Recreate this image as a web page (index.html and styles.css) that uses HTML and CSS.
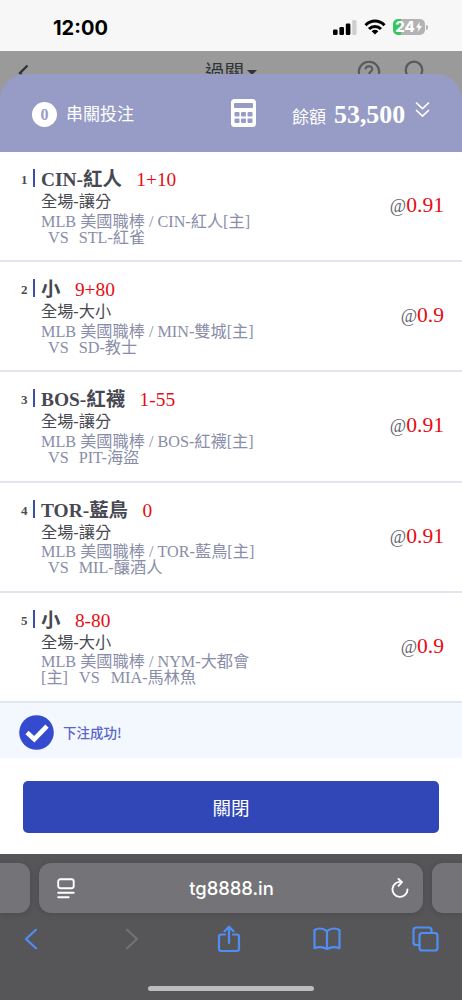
FILE: index.html
```html
<!DOCTYPE html>
<html lang="zh-Hant">
<head>
<meta charset="utf-8">
<meta name="viewport" content="width=device-width, initial-scale=1">
<title>串關投注</title>
<link rel="stylesheet" href="styles.css">
</head>
<body>
<header class="status">
  <span class="clock">12:00</span>
  <div class="status-icons">
    <svg class="signal" width="24" height="16" viewBox="0 0 24 16"><rect x="0" y="9.5" width="4.6" height="5.5" rx="1.3"/><rect x="6.4" y="7" width="4.6" height="8" rx="1.3"/><rect x="12.8" y="3.5" width="4.6" height="11.5" rx="1.3"/><rect x="19.2" y="0" width="4.3" height="15" rx="1.3" fill="#cfcfcf"/></svg>
    <svg class="wifi" width="22" height="16" viewBox="0 0 22 16" fill="none" stroke="#000" stroke-width="3"><path d="M1.5 6.2C7 .7 15 .7 20.5 6.2"/><path d="M5 10C8.4 6.5 13.6 6.5 17 10"/><path d="M7.6 12.2Q11 9.4 14.4 12.2L11 15.6Z" fill="#000" stroke="none"/></svg>
    <span class="battery"><span class="battery-value">24</span><svg width="8" height="12" viewBox="0 0 9 12"><path d="M5.5.5 1 6.7h3L3 11.5 8 5H4.9Z" fill="#fff"/></svg></span><i class="nub"></i>
  </div>
</header>
<nav class="page-nav">
  <svg class="back" width="12" height="18" viewBox="0 0 12 18" fill="none" stroke="#30343a" stroke-width="2.4"><path d="M9.5 1.5 2 9l7.500 7.500"/></svg>
  <span class="page-title">過關<i class="caret"></i></span>
  <svg class="help" width="24" height="24" viewBox="0 0 24 24" fill="none" stroke="#555961" stroke-width="2"><circle cx="12" cy="12" r="10.200"/><path d="M8.500 9.200C8.800 5 15.500 5.200 15.300 9.300C15.200 11.500 12 11.700 12 14.500M12 16v2"/></svg>
  <svg class="search" width="22" height="24" viewBox="0 0 22 24" fill="none" stroke="#555961" stroke-width="2.200"><circle cx="10" cy="10" r="8.300"/><path d="m16 16 5 6"/></svg>
</nav>
<main class="sheet">
  <header class="slip-head">
    <span class="count">0</span>
    <span class="slip-title">串關投注</span>
    <svg class="calc" width="25" height="28" viewBox="0 0 25 28"><rect width="25" height="28" rx="3.500" fill="#fff"/><g fill="#969cc5"><rect x="3" y="4" width="19" height="5" rx="1"/><rect x="3.500" y="13" width="5" height="4.500" rx="1"/><rect x="10" y="13" width="5" height="4.500" rx="1"/><rect x="16.500" y="13" width="5" height="4.500" rx="1"/><rect x="3.500" y="19.500" width="5" height="4.500" rx="1"/><rect x="10" y="19.500" width="5" height="4.500" rx="1"/><rect x="16.500" y="19.500" width="5" height="4.500" rx="1"/></g></svg>
    <span class="balance"><span class="balance-label">餘額</span><b>53,500</b></span>
    <svg class="collapse" width="15" height="17" viewBox="0 0 15 17" fill="none" stroke="#fff" stroke-width="1.700"><path d="m1 1.500 6.500 6L14 1.500M1 9l6.500 6L14 9"/></svg>
  </header>
  <ol class="bets">
    <li class="bet"><span class="num">1</span><div class="info"><div class="pick"><b>CIN-紅人</b><span>1+10</span></div><div class="market">全場-讓分</div><div class="match">MLB 美國職棒 / CIN-紅人[主]<br><span class="versus">VS</span>STL-紅雀</div></div><div class="odds">@<strong>0.91</strong></div></li>
    <li class="bet"><span class="num">2</span><div class="info"><div class="pick"><b>小</b><span>9+80</span></div><div class="market">全場-大小</div><div class="match">MLB 美國職棒 / MIN-雙城[主]<br><span class="versus">VS</span>SD-教士</div></div><div class="odds">@<strong>0.9</strong></div></li>
    <li class="bet"><span class="num">3</span><div class="info"><div class="pick"><b>BOS-紅襪</b><span>1-55</span></div><div class="market">全場-讓分</div><div class="match">MLB 美國職棒 / BOS-紅襪[主]<br><span class="versus">VS</span>PIT-海盜</div></div><div class="odds">@<strong>0.91</strong></div></li>
    <li class="bet"><span class="num">4</span><div class="info"><div class="pick"><b>TOR-藍鳥</b><span>0</span></div><div class="market">全場-讓分</div><div class="match">MLB 美國職棒 / TOR-藍鳥[主]<br><span class="versus">VS</span>MIL-釀酒人</div></div><div class="odds">@<strong>0.91</strong></div></li>
    <li class="bet"><span class="num">5</span><div class="info"><div class="pick"><b>小</b><span>8-80</span></div><div class="market">全場-大小</div><div class="match">MLB 美國職棒 / NYM-大都會<br>[主]<span class="versus wide">VS</span>MIA-馬林魚</div></div><div class="odds">@<strong>0.9</strong></div></li>
  </ol>
  <div class="success">
    <svg width="35" height="35" viewBox="0 0 35 35"><circle cx="17.500" cy="17.500" r="17.300" fill="#344bd0"/><path d="m8 17.500 7.300 6.700L28 11.200" fill="none" stroke="#fff" stroke-width="4.600"/></svg>
    <span>下注成功!</span>
  </div>
  <div class="actions"><button class="close">關閉</button></div>
</main>
<footer class="browser">
  <div class="tabs">
    <div class="tab side left"></div>
    <div class="tab address">
      <svg width="18" height="21" viewBox="0 0 18 21" fill="none" stroke="#fff" stroke-width="1.900" stroke-linecap="round"><rect x="1.200" y="1.200" width="15.500" height="9" rx="2.200"/><path d="M1.200 14.700h15.500M1.200 19.200h10.500"/></svg>
      <span class="host">tg8888.in</span>
      <svg width="18" height="21" viewBox="0 0 18 21" fill="none" stroke="#fff" stroke-width="1.900" stroke-linecap="round" stroke-linejoin="round"><path d="M10.500 4A7.500 7.500 0 1 0 16.500 11.400M7.500 1 11 4.200 7.500 7.800"/></svg>
    </div>
    <div class="tab side right"></div>
  </div>
  <div class="tools">
    <svg width="14" height="22" viewBox="0 0 14 22"><path d="M12 1.800 2 11l10 9.200"/></svg>
    <svg class="disabled" width="14" height="22" viewBox="0 0 14 22"><path d="m2 1.800 10 9.200L2 20.200"/></svg>
    <svg class="share" width="24" height="28" viewBox="0 0 24 28"><path d="M8 9.500H4.200Q2 9.500 2 11.700v12.100Q2 26 4.200 26h15.600q2.200 0 2.200-2.200V11.700q0-2.200-2.200-2.200H16M12 18V2M7.500 6.200 12 1.700l4.500 4.500"/></svg>
    <svg class="book" width="28" height="24" viewBox="0 0 28 24"><path d="M14 4.200Q8-.5 1.500 3v18.200Q8 18.500 14 22Q20 18.500 26.500 21.200V3Q20-.5 14 4.200V22"/></svg>
    <svg class="windows" width="27" height="26" viewBox="0 0 27 26"><rect x="7.500" y="7" width="18" height="17.500" rx="2.800"/><path d="M7.500 19H4.300Q1.500 19 1.500 16.200V4.300Q1.500 1.500 4.300 1.500h12.400q2.800 0 2.800 2.800V7"/></svg>
  </div>
  <div class="home-bar"></div>
</footer>
</body>
</html>
```
FILE: styles.css
```css
* { box-sizing: border-box; }
body {
  margin: 0;
  width: 462px;
  height: 1000px;
  overflow: hidden;
  display: flex;
  flex-direction: column;
  background: #9a9a9a;
  font-family: "Liberation Serif", "Noto Sans CJK TC", serif;
}
svg { display: block; flex: none; }
.status {
  height: 51px;
  flex: none;
  display: flex;
  justify-content: space-between;
  padding: 16px 34px 0 53px;
  background: #f7f7f7;
}
.clock { font: 700 20px/25px Inter, sans-serif; }
.status-icons { display: flex; align-items: flex-start; }
.signal { margin: 4px 7px 0 0; }
.wifi { margin: 3px 7px 0 0; }
.battery {
  display: flex;
  align-items: center;
  justify-content: center;
  width: 32px;
  height: 16px;
  margin-top: 3px;
  border-radius: 5px;
  background: linear-gradient(to right, #35c759 25%, #b3b3b3 25%);
  color: #fff;
  font: 800 15px/16px Inter, sans-serif;
}
.battery-value { letter-spacing: -.2px; }
.nub { width: 2px; height: 5px; margin: 9px 0 0 1px; border-radius: 0 2px 2px 0; background: #b3b3b3; }
.page-nav {
  height: 50px;
  flex: none;
  display: flex;
  align-items: flex-start;
  padding: 9px 0 0 18px;
  background: #9a9a9a;
  color: #30343a;
}
.back { margin-top: 4px; }
.page-title { display: flex; margin: 1px 0 0 175px; font-size: 19.500px; line-height: 24px; }
.caret {
  width: 0;
  height: 0;
  margin: 9px 0 0 3px;
  border: 5px solid transparent;
  border-top-color: #30343a;
  border-bottom: 0;
}
.help { margin-left: 100px; }
.search { margin: 0 0 0 23px; }
.sheet {
  height: 780px;
  flex: none;
  margin-top: -27px;
  overflow: hidden;
  border-radius: 26px 26px 0 0;
  background: #969cc5;
}
.slip-head {
  height: 78px;
  display: flex;
  align-items: flex-start;
  padding: 0 31px 0 32px;
  background: #969cc5;
  color: #fff;
}
.count {
  width: 25px;
  height: 25px;
  margin-top: 28px;
  border-radius: 50%;
  background: #fff;
  color: #969cc5;
  text-align: center;
  font-size: 16px;
  font-weight: 700;
  line-height: 25px;
}
.slip-title { width: 70px; margin: 29px 0 0 9px; font-size: 17px; line-height: 24px; white-space: nowrap; }
.calc { margin: 25px 0 0 95px; }
.balance { width: 116px; margin: 25px 0 0 36px; line-height: 32px; white-space: nowrap; }
.balance-label { font-size: 17px; }
.balance b { margin-left: 8px; font-size: 25.900px; }
.collapse { margin: 27px 0 0 7px; }
.bets { margin: 0; padding: 0; list-style: none; background: #fff; }
.bet {
  height: 110.200px;
  display: flex;
  align-items: flex-start;
  padding: 0 18px 0 21px;
  border-bottom: 2.500px solid #e3e4f2;
}
.num {
  width: 14px;
  height: 18px;
  margin-top: 17px;
  border-right: 2px solid #3d4da8;
  color: #4b4c54;
  font-size: 13px;
  font-weight: 700;
  line-height: 21px;
}
.info { flex: 1; margin: 17px 0 0 6px; white-space: nowrap; }
.pick { display: flex; gap: 14.500px; height: 22px; line-height: 22px; font-size: 19.400px; color: #464852; }
.pick span { color: #e60c13; }
.market { height: 22.500px; line-height: 22px; font-size: 16.200px; color: #484a52; }
.match { font-size: 16.200px; line-height: 16.200px; color: #898da8; }
.versus { margin: 0 10px 0 7px; }
.versus.wide { margin-left: 11px; margin-right: 11px; }
.odds { margin-top: 39px; font-size: 17.800px; line-height: 28px; color: #62656f; white-space: nowrap; }
.odds strong { font-size: 21.600px; font-weight: 400; color: #e60c13; }
.success {
  height: 55px;
  display: flex;
  align-items: center;
  gap: 9px;
  padding: 4px 19px 0;
  background: #f3f7fe;
  color: #5965c9;
  font: 500 13.500px/20px "Noto Sans CJK TC", sans-serif;
}
.actions { height: 96px; padding: 23px; background: #fff; }
.close {
  display: block;
  width: 100%;
  height: 52px;
  border: 0;
  border-radius: 5px;
  background: #3147b7;
  color: #fff;
  font: 400 18.500px/50px "Noto Sans CJK TC", sans-serif;
}
.browser { flex: 1; background: #565659; }
.tabs { display: flex; gap: 9px; padding-top: 9px; }
.tab { height: 50px; background: #747478; box-shadow: 0 1px 6px rgba(0, 0, 0, .14); }
.side { width: 30px; flex: none; }
.left { border-radius: 0 11px 11px 0; }
.right { border-radius: 11px 0 0 11px; }
.address {
  flex: 1;
  display: flex;
  align-items: center;
  justify-content: space-between;
  padding: 0 14px 0 18px;
  border-radius: 12px;
  color: #fff;
}
.host { margin-right: 3px; font: 500 18.400px/24px Inter, sans-serif; }
.tools {
  display: flex;
  align-items: center;
  height: 28px;
  margin-top: 12px;
  padding-left: 24px;
  fill: none;
  stroke: #4f8ff5;
  stroke-width: 2.200;
  stroke-linecap: round;
  stroke-linejoin: round;
}
.tools .disabled { margin-left: 87px; stroke: #737376; }
.share { margin-left: 78px; }
.book { margin-left: 72px; }
.windows { margin-left: 71px; }
.home-bar { width: 166px; height: 5px; margin: 33px auto 0; border-radius: 3px; background: #bcbcbd; }
```
